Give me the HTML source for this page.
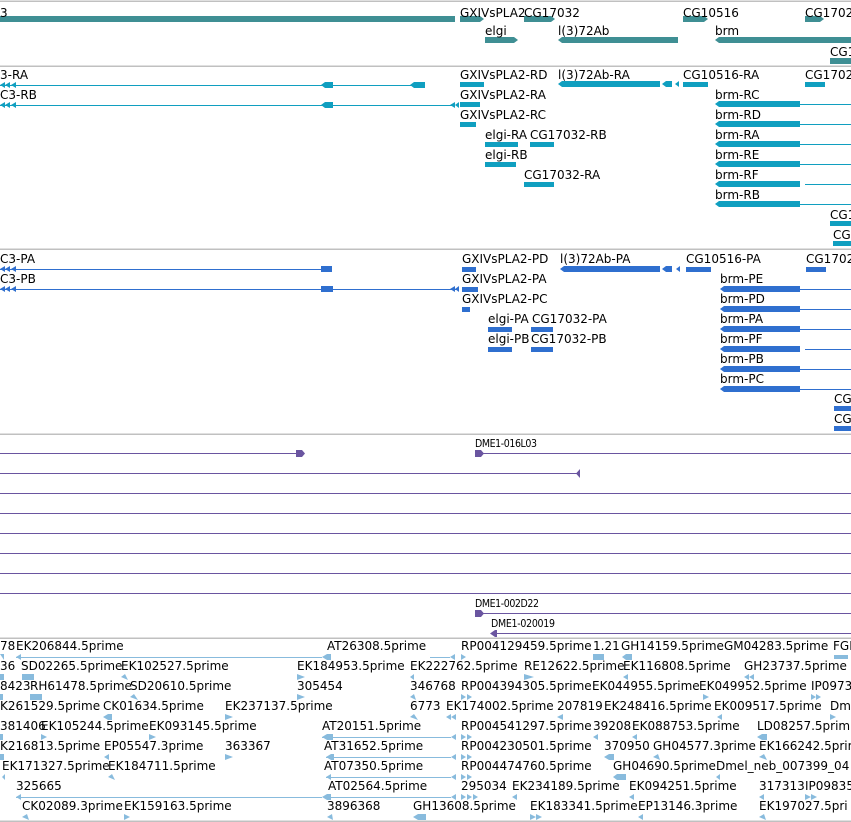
<!DOCTYPE html>
<html><head><meta charset="utf-8"><style>
html,body{margin:0;padding:0;background:#fff;}
svg{display:block}
text{font-family:"DejaVu Sans","Liberation Sans",sans-serif;font-size:12px;fill:#000}
.d{font-family:"DejaVu Sans Condensed","DejaVu Sans",sans-serif;font-size:10.5px}
</style></head><body>
<svg width="851" height="822" viewBox="0 0 851 822" xmlns="http://www.w3.org/2000/svg">
<g shape-rendering="crispEdges">
<g stroke="#c0c0c0" stroke-width="1.5">
<line x1="0" y1="1" x2="851" y2="1"/><line x1="0" y1="66" x2="851" y2="66"/>
<line x1="0" y1="249" x2="851" y2="249"/><line x1="0" y1="434" x2="851" y2="434"/>
<line x1="0" y1="638" x2="851" y2="638"/><line x1="0" y1="821" x2="851" y2="821"/>
</g>
<g stroke="#109fc0" stroke-width="1">
<line x1="0" y1="85.5" x2="425" y2="85.5"/>
<line x1="0" y1="105.5" x2="455" y2="105.5"/>
<line x1="800" y1="104.5" x2="851" y2="104.5"/><line x1="800" y1="124.5" x2="851" y2="124.5"/><line x1="800" y1="144.5" x2="851" y2="144.5"/><line x1="800" y1="164.5" x2="851" y2="164.5"/><line x1="805" y1="184.5" x2="851" y2="184.5"/><line x1="800" y1="204.5" x2="851" y2="204.5"/>
</g>
<g stroke="#2f6fcf" stroke-width="1">
<line x1="0" y1="269.5" x2="331" y2="269.5"/>
<line x1="0" y1="289.5" x2="458" y2="289.5"/>
<line x1="800" y1="289.5" x2="851" y2="289.5"/><line x1="800" y1="309.5" x2="851" y2="309.5"/><line x1="800" y1="329.5" x2="851" y2="329.5"/><line x1="805" y1="349.5" x2="851" y2="349.5"/><line x1="800" y1="369.5" x2="851" y2="369.5"/><line x1="800" y1="389.5" x2="851" y2="389.5"/>
</g>
<g stroke="#6a55a0" stroke-width="1">
<line x1="0" y1="453.5" x2="300" y2="453.5"/><line x1="480" y1="453.5" x2="851" y2="453.5"/>
<line x1="0" y1="473.5" x2="580" y2="473.5"/>
<line x1="0" y1="493.5" x2="851" y2="493.5"/><line x1="0" y1="513.5" x2="851" y2="513.5"/>
<line x1="0" y1="533.5" x2="851" y2="533.5"/><line x1="0" y1="553.5" x2="851" y2="553.5"/>
<line x1="0" y1="573.5" x2="851" y2="573.5"/><line x1="0" y1="593.5" x2="851" y2="593.5"/>
<line x1="480" y1="613.5" x2="851" y2="613.5"/><line x1="492" y1="633.5" x2="851" y2="633.5"/>
</g>
<g stroke="#88bbdd" stroke-width="1">
<line x1="16" y1="657.5" x2="322" y2="657.5"/><line x1="430" y1="657.5" x2="450" y2="657.5"/>
<line x1="322" y1="737.5" x2="451" y2="737.5"/><line x1="326" y1="757.5" x2="451" y2="757.5"/>
<line x1="326" y1="777.5" x2="451" y2="777.5"/><line x1="16" y1="797.5" x2="322" y2="797.5"/><line x1="326" y1="797.5" x2="451" y2="797.5"/>
</g>
</g>
<!-- genes -->
<g fill="#3f8f94">
<rect x="0" y="16" width="455" height="6"/>
<polygon points="460,16 480,16 484,19 480,22 460,22"/>
<polygon points="524,16 551,16 555,19 551,22 524,22"/>
<polygon points="683,16 704,16 708,19 704,22 683,22"/>
<polygon points="805,16 820,16 824,19 820,22 805,22"/>
<polygon points="485,37 514,37 518,40 514,43 485,43"/>
<polygon points="562,37 678,37 678,43 562,43 558,40"/>
<polygon points="719,37 851,37 851,43 719,43 715,40"/>
<rect x="830" y="58" width="21" height="6"/>
</g>
<text x="0" y="17">3</text><text x="460" y="17">GXIVsPLA2</text><text x="524" y="17">CG17032</text>
<text x="683" y="17">CG10516</text><text x="805" y="17">CG1702</text>
<text x="485" y="35">elgi</text><text x="558" y="35">l(3)72Ab</text><text x="715" y="35">brm</text><text x="830" y="56">CG1</text>

<!-- transcripts -->
<g fill="#109fc0">
<polygon points="0,85 5,82 5,88"/><polygon points="5,85 10,82 10,88"/><polygon points="11,85 16,82 16,88"/>
<polygon points="0,105 5,102 5,108"/><polygon points="5,105 10,102 10,108"/><polygon points="11,105 16,102 16,108"/>
<polygon points="321,85 325,82 333,82 333,88 325,88"/><polygon points="410,85 414,82 425,82 425,88 414,88"/>
<polygon points="321,105 325,102 333,102 333,108 325,108"/>
<polygon points="450,105 455,102 455,108"/><polygon points="455,105 459,102 459,108"/>
<rect x="460" y="82" width="24" height="5"/><rect x="460" y="102" width="20" height="5"/><rect x="460" y="122" width="16" height="5"/>
<rect x="485" y="142" width="33" height="5"/><rect x="530" y="142" width="24" height="5"/>
<rect x="485" y="162" width="31" height="5"/><rect x="524" y="182" width="30" height="5"/>
<polygon points="558,84 562,81 660,81 660,87 562,87"/><polygon points="662,84 666,81 672,81 672,87 666,87"/><polygon points="675,84 679,81 679,87"/>
<rect x="683" y="82" width="25" height="5"/><rect x="805" y="82" width="20" height="5"/>
<polygon points="715,104 719,101 800,101 800,107 719,107"/>
<polygon points="715,124 719,121 800,121 800,127 719,127"/>
<polygon points="715,144 719,141 800,141 800,147 719,147"/>
<polygon points="715,164 719,161 800,161 800,167 719,167"/>
<polygon points="715,184 719,181 800,181 800,187 719,187"/>
<polygon points="715,204 719,201 800,201 800,207 719,207"/>
<rect x="830" y="221" width="21" height="5"/><rect x="833" y="241" width="18" height="5"/>
</g>
<g>
<text x="0" y="79">3-RA</text><text x="0" y="99">C3-RB</text>
<text x="460" y="79">GXIVsPLA2-RD</text><text x="460" y="99">GXIVsPLA2-RA</text><text x="460" y="119">GXIVsPLA2-RC</text>
<text x="485" y="139">elgi-RA</text><text x="530" y="139">CG17032-RB</text><text x="485" y="159">elgi-RB</text><text x="524" y="179">CG17032-RA</text>
<text x="558" y="79">l(3)72Ab-RA</text><text x="683" y="79">CG10516-RA</text><text x="805" y="79">CG1702</text>
<text x="715" y="99">brm-RC</text><text x="715" y="119">brm-RD</text><text x="715" y="139">brm-RA</text>
<text x="715" y="159">brm-RE</text><text x="715" y="179">brm-RF</text><text x="715" y="199">brm-RB</text>
<text x="830" y="219">CG1</text><text x="833" y="239">CG</text>
</g>

<!-- proteins -->
<g fill="#2f6fcf">
<polygon points="0,269 5,266 5,272"/><polygon points="5,269 10,266 10,272"/><polygon points="11,269 16,266 16,272"/>
<polygon points="0,289 5,286 5,292"/><polygon points="5,289 10,286 10,292"/><polygon points="11,289 16,286 16,292"/>
<rect x="321" y="266" width="11" height="6"/><rect x="321" y="286" width="12" height="6"/>
<polygon points="450,289 455,286 455,292"/><polygon points="455,289 459,286 459,292"/>
<rect x="462" y="267" width="14" height="5"/><rect x="462" y="287" width="16" height="5"/><rect x="462" y="307" width="8" height="5"/>
<rect x="488" y="327" width="24" height="5"/><rect x="531" y="327" width="22" height="5"/>
<rect x="488" y="347" width="24" height="5"/><rect x="531" y="347" width="22" height="5"/>
<polygon points="560,269 564,266 660,266 660,272 564,272"/><polygon points="662,269 666,266 672,266 672,272 666,272"/><polygon points="676,269 680,266 680,272"/>
<rect x="686" y="267" width="25" height="5"/><rect x="806" y="267" width="20" height="5"/>
<polygon points="720,289 724,286 800,286 800,292 724,292"/>
<polygon points="720,309 724,306 800,306 800,312 724,312"/>
<polygon points="720,329 724,326 800,326 800,332 724,332"/>
<polygon points="720,349 724,346 800,346 800,352 724,352"/>
<polygon points="720,369 724,366 800,366 800,372 724,372"/>
<polygon points="720,389 724,386 800,386 800,392 724,392"/>
<rect x="834" y="406" width="17" height="5"/><rect x="834" y="426" width="17" height="5"/>
</g>
<g>
<text x="0" y="263">C3-PA</text><text x="0" y="283">C3-PB</text>
<text x="462" y="263">GXIVsPLA2-PD</text><text x="462" y="283">GXIVsPLA2-PA</text><text x="462" y="303">GXIVsPLA2-PC</text>
<text x="488" y="323">elgi-PA</text><text x="532" y="323">CG17032-PA</text><text x="488" y="343">elgi-PB</text><text x="531" y="343">CG17032-PB</text>
<text x="560" y="263">l(3)72Ab-PA</text><text x="686" y="263">CG10516-PA</text><text x="806" y="263">CG1702</text>
<text x="720" y="283">brm-PE</text><text x="720" y="303">brm-PD</text><text x="720" y="323">brm-PA</text>
<text x="720" y="343">brm-PF</text><text x="720" y="363">brm-PB</text><text x="720" y="383">brm-PC</text>
<text x="834" y="403">CG</text><text x="834" y="423">CG</text>
</g>

<!-- purple -->
<g fill="#6a55a0">
<polygon points="296,450 302,450 305,453.5 302,457 296,457"/>
<polygon points="475,450 481,450 484,453.5 481,457 475,457"/>
<polygon points="576,473.5 580,469 580,478"/>
<polygon points="475,610 481,610 484,613.5 481,617 475,617"/>
<polygon points="490,633.5 495,630 497,630 497,637 495,637"/>
</g>
<text class="d" x="475" y="447" textLength="62">DME1-016L03</text>
<text class="d" x="475" y="607" textLength="64">DME1-002D22</text>
<text class="d" x="491" y="627" textLength="64">DME1-020019</text>

<!-- ESTs -->
<g fill="#88bbdd">
<polygon points="0,654 4,654 4,660"/><polygon points="16,657 21,654 21,660"/><polygon points="322,657 327,654 331,654 331,660 327,660"/>
<polygon points="450,657 455,654 455,660"/><polygon points="461,654 466,657 461,660"/><rect x="593" y="654" width="11" height="6"/><polygon points="622,657 626,654 632,654 632,660 626,660"/><rect x="834" y="655" width="14" height="4"/>
<rect x="0" y="674" width="4" height="6"/><rect x="22" y="674" width="12" height="6"/><polygon points="121,677 125,674 128,680"/><polygon points="297,674 305,677 297,680"/><polygon points="410,677 414,674 414,680"/><polygon points="524,674 534,677 524,680"/><polygon points="623,677 628,674 628,680"/><polygon points="744,677 749,674 749,680"/><polygon points="749,677 754,674 754,680"/>
<rect x="0" y="694" width="3" height="6"/><rect x="30" y="694" width="12" height="6"/><polygon points="130,697 134,694 138,700"/><polygon points="297,694 305,697 297,700"/><polygon points="410,697 414,694 416,700"/><polygon points="461,694 466,697 461,700"/><polygon points="467,694 472,697 467,700"/><polygon points="703,694 709,697 703,700"/><polygon points="811,694 816,697 811,700"/><polygon points="816,694 821,697 816,700"/>
<polygon points="103,717 108,714 112,714 112,720 108,720"/><polygon points="225,714 233,717 225,720"/><polygon points="410,717 414,714 418,720"/><polygon points="446,717 451,714 451,720"/><polygon points="451,717 456,714 456,720"/><polygon points="557,717 563,714 563,720"/><polygon points="717,717 722,714 722,720"/><polygon points="830,714 836,717 830,720"/>
<rect x="0" y="734" width="3" height="6"/><polygon points="41,734 47,737 41,740"/><polygon points="149,734 156,737 149,740"/><polygon points="322,737 327,734 333,734 333,740 327,740"/><polygon points="451,737 456,734 456,740"/><polygon points="461,734 466,737 461,740"/><polygon points="467,734 472,737 467,740"/><polygon points="593,737 598,734 598,740"/><polygon points="632,737 637,734 637,740"/><polygon points="757,737 762,734 767,734 767,740 762,740"/>
<rect x="0" y="754" width="4" height="6"/><polygon points="104,757 109,754 109,760"/><polygon points="225,754 233,757 225,760"/><polygon points="326,757 331,754 334,754 334,760 331,760"/><polygon points="451,757 456,754 456,760"/><polygon points="461,754 466,757 461,760"/><polygon points="467,754 472,757 467,760"/><polygon points="604,757 609,754 614,754 614,760 609,760"/><polygon points="653,757 658,754 660,760"/><polygon points="759,757 764,754 767,760"/>
<polygon points="2,777 5,774 5,780"/><polygon points="108,777 112,774 115,780"/><polygon points="326,777 331,774 331,780"/><polygon points="451,777 456,774 456,780"/><polygon points="461,774 466,777 461,780"/><polygon points="467,774 472,777 467,780"/><polygon points="613,777 617,774 626,774 626,780 617,780"/><polygon points="716,777 720,774 720,780"/>
<polygon points="16,797 21,794 21,800"/><polygon points="322,797 327,794 331,794 331,800 327,800"/><polygon points="451,797 456,794 456,800"/><polygon points="461,794 466,797 461,800"/><polygon points="467,794 472,797 467,800"/><polygon points="473,794 478,797 473,800"/><polygon points="512,797 517,794 517,800"/><polygon points="629,797 634,794 634,800"/><polygon points="759,797 764,794 764,800"/><polygon points="805,794 811,797 805,800"/><polygon points="811,794 817,797 811,800"/>
<polygon points="22,817 27,814 29,820"/><polygon points="124,814 130,817 124,820"/><polygon points="327,817 332,814 333,820"/><polygon points="413,817 418,814 426,814 426,820 418,820"/><polygon points="530,814 536,817 530,820"/><polygon points="536,814 542,817 536,820"/><polygon points="638,817 643,814 643,820"/><polygon points="759,817 764,814 766,820"/>
</g>
<g>
<text x="0" y="650">78</text><text x="16" y="650">EK206844.5prime</text><text x="327" y="650">AT26308.5prime</text><text x="461" y="650">RP004129459.5prime</text><text x="593" y="650">1.21</text><text x="621" y="650">GH14159.5prime</text><text x="724" y="650">GM04283.5prime</text><text x="833" y="650">FGH</text>
<text x="0" y="670">36</text><text x="21" y="670">SD02265.5prime</text><text x="121" y="670">EK102527.5prime</text><text x="297" y="670">EK184953.5prime</text><text x="410" y="670">EK222762.5prime</text><text x="524" y="670">RE12622.5prime</text><text x="623" y="670">EK116808.5prime</text><text x="744" y="670">GH23737.5prime</text>
<text x="0" y="690">8423</text><text x="30" y="690">RH61478.5prime</text><text x="130" y="690">SD20610.5prime</text><text x="297" y="690">305454</text><text x="410" y="690">346768</text><text x="461" y="690">RP004394305.5prime</text><text x="592" y="690">EK044955.5prime</text><text x="699" y="690">EK049952.5prime</text><text x="811" y="690">IP0973</text>
<text x="0" y="710">K261529.5prime</text><text x="103" y="710">CK01634.5prime</text><text x="225" y="710">EK237137.5prime</text><text x="410" y="710">6773</text><text x="446" y="710">EK174002.5prime</text><text x="557" y="710">207819</text><text x="604" y="710">EK248416.5prime</text><text x="714" y="710">EK009517.5prime</text><text x="830" y="710">Dmel</text>
<text x="0" y="730">381406</text><text x="41" y="730">EK105244.5prime</text><text x="149" y="730">EK093145.5prime</text><text x="322" y="730">AT20151.5prime</text><text x="461" y="730">RP004541297.5prime</text><text x="593" y="730">39208</text><text x="632" y="730">EK088753.5prime</text><text x="757" y="730">LD08257.5prim</text>
<text x="0" y="750">K216813.5prime</text><text x="104" y="750">EP05547.3prime</text><text x="225" y="750">363367</text><text x="324" y="750">AT31652.5prime</text><text x="461" y="750">RP004230501.5prime</text><text x="604" y="750">370950</text><text x="653" y="750">GH04577.3prime</text><text x="759" y="750">EK166242.5prim</text>
<text x="2" y="770">EK171327.5prime</text><text x="108" y="770">EK184711.5prime</text><text x="324" y="770">AT07350.5prime</text><text x="461" y="770">RP004474760.5prime</text><text x="613" y="770">GH04690.5prime</text><text x="716" y="770">Dmel_neb_007399_04</text>
<text x="16" y="790">325665</text><text x="328" y="790">AT02564.5prime</text><text x="461" y="790">295034</text><text x="512" y="790">EK234189.5prime</text><text x="629" y="790">EK094251.5prime</text><text x="759" y="790">317313</text><text x="805" y="790">IP09835</text>
<text x="22" y="810">CK02089.3prime</text><text x="124" y="810">EK159163.5prime</text><text x="327" y="810">3896368</text><text x="413" y="810">GH13608.5prime</text><text x="530" y="810">EK183341.5prime</text><text x="638" y="810">EP13146.3prime</text><text x="759" y="810">EK197027.5pri</text>
</g>
</svg>
</body></html>
